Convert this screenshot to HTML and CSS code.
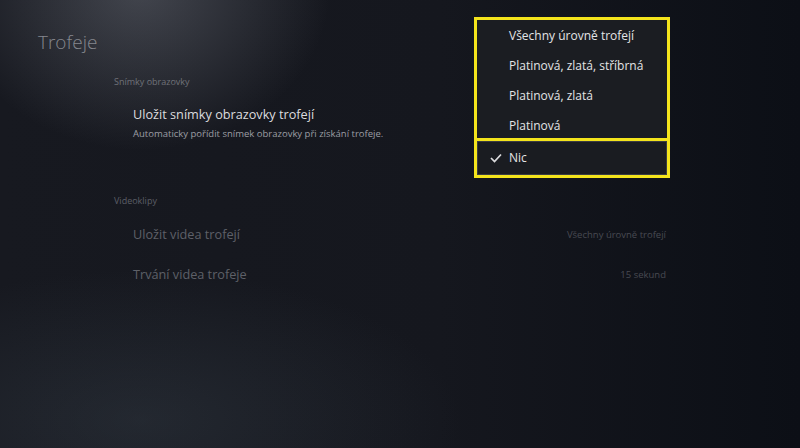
FILE: index.html
```html
<!doctype html>
<html lang="cs">
 <head>
  <meta charset="UTF-8">
  <link rel="stylesheet" href="styles.css">
  <title>Trofeje</title>
 </head>
 <body>
  <div class="screen">
   <h1 class="title">Trofeje</h1>
   <div class="settings">
    <section class="group">
     <div class="group-head">Snímky obrazovky</div>
     <div class="row row-main">
      <div class="row-label">Uložit snímky obrazovky trofejí</div>
      <div class="row-desc">Automaticky pořídit snímek obrazovky při získání trofeje.</div>
     </div>
    </section>
    <section class="group group2">
     <div class="group-head dim">Videoklipy</div>
     <div class="row row-off">
      <div class="row-label">Uložit videa trofejí</div>
      <div class="row-value">Všechny úrovně trofejí</div>
     </div>
     <div class="row row-off">
      <div class="row-label">Trvání videa trofeje</div>
      <div class="row-value">15 sekund</div>
     </div>
    </section>
   </div>
   <ul class="menu">
    <li class="opt">Všechny úrovně trofejí</li>
    <li class="opt">Platinová, zlatá, stříbrná</li>
    <li class="opt">Platinová, zlatá</li>
    <li class="opt">Platinová</li>
    <li class="opt sel">
     <svg class="tick" width="12" height="10" viewBox="0 0 12 10"><polyline points="1,5 4.5,8.5 11,1.5" fill="none" stroke="#dcdcde" stroke-width="1.7"/></svg>Nic
    </li>
   </ul>
  </div>
 </body>
</html>
```

FILE: styles.css
```css
body{margin:0;padding:0;}
.screen{
    position:relative;
    width:800px; height:448px; overflow:hidden;
    font-family:"Open Sans","Noto Sans",sans-serif;
    background:
      radial-gradient(ellipse 190px 160px at 140px -10px,rgba(120,124,134,0.45),rgba(120,124,134,0) 100%),
      radial-gradient(ellipse 320px 150px at 140px 420px,rgba(60,70,80,0.35),rgba(60,70,80,0) 100%),
      linear-gradient(90deg,#171920 0%,#15171e 55%,#0c0f16 100%);
    display:flex;
    box-sizing:border-box;
    padding:28px 0 0 38px;
}
.title{
    margin:0; width:76px;
    font-size:19px; font-weight:300;
    color:#85878e;
    line-height:28px;
}
.settings{
    width:552px;
    padding-top:45px;
}
.group-head{
    font-size:9px; color:#707279;
    line-height:18px;
    margin-bottom:14px;
}
.group-head.dim{color:#5c5e66;}
.row{padding-left:19px;}
.row-label{font-size:12.7px; line-height:18px;}
.row-main .row-label{color:#dcdcdf;}
.row-desc{font-size:9.5px; color:#9c9ea4; line-height:16px; margin-top:3px;}
.group2{margin-top:50px;}
.group2 .group-head{margin-bottom:4px;}
.row-off{
    display:flex; justify-content:space-between; align-items:center;
    height:40px;
}
.row-off .row-label{color:#5e6068;}
.row-value{font-size:9.5px; color:#484a52;}
.menu{
    position:absolute; left:474px; top:17px;
    width:190px; margin:0; padding:1px 0 0;
    list-style:none;
    border:3px solid #f4e41c;
    background:#1b1d22;
}
.opt{
    height:30px; line-height:30px;
    padding-left:32px;
    font-size:12px; color:#e4e4e6;
    position:relative;
}
.opt:nth-child(4){height:27px;}
.opt.sel{
    height:34px; line-height:34px;
    border-top:3px solid #f4e41c;
    background:#1a1c21;
    box-shadow:inset 0 0 0 1px #3a3c42;
}
.tick{
    position:absolute; left:13px; top:12px;
}
```
